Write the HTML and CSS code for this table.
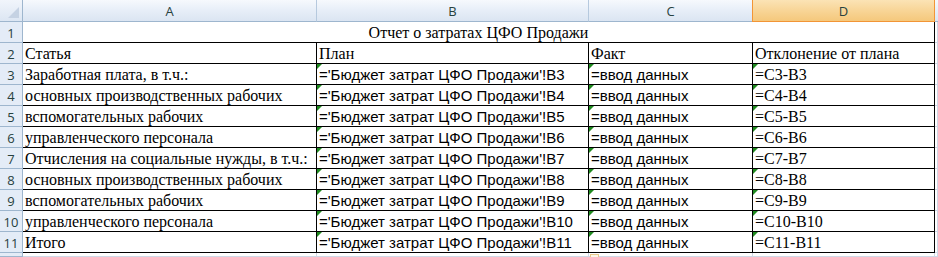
FILE: index.html
```html
<!DOCTYPE html>
<html lang="ru">
<head>
<meta charset="utf-8">
<title>Отчет о затратах ЦФО Продажи</title>
<link rel="stylesheet" href="styles.css">
</head>
<body>
<div class="sheet">
  <div class="corner"><span class="corner-tri"></span></div>
  <div class="colhead">A</div>
  <div class="colhead">B</div>
  <div class="colhead">C</div>
  <div class="colhead sel">D</div>
  <div class="colhead edge"></div>

  <div class="rowhead">1</div>
  <div class="cell title">Отчет о затратах ЦФО Продажи</div>
  <div class="cell grid"></div>

  <div class="rowhead">2</div>
  <div class="cell b serif">Статья</div>
  <div class="cell b serif">План</div>
  <div class="cell b serif">Факт</div>
  <div class="cell b serif">Отклонение от плана</div>
  <div class="cell grid"></div>

  <div class="rowhead">3</div>
  <div class="cell b serif">Заработная плата, в т.ч.:</div>
  <div class="cell b sans flag">='Бюджет затрат ЦФО Продажи'!B3</div>
  <div class="cell b sans flag">=ввод данных</div>
  <div class="cell b serif flag">=C3-B3</div>
  <div class="cell grid"></div>

  <div class="rowhead">4</div>
  <div class="cell b serif">основных производственных рабочих</div>
  <div class="cell b sans flag">='Бюджет затрат ЦФО Продажи'!B4</div>
  <div class="cell b sans flag">=ввод данных</div>
  <div class="cell b serif flag">=C4-B4</div>
  <div class="cell grid"></div>

  <div class="rowhead">5</div>
  <div class="cell b serif">вспомогательных рабочих</div>
  <div class="cell b sans flag">='Бюджет затрат ЦФО Продажи'!B5</div>
  <div class="cell b sans flag">=ввод данных</div>
  <div class="cell b serif flag">=C5-B5</div>
  <div class="cell grid"></div>

  <div class="rowhead">6</div>
  <div class="cell b serif">управленческого персонала</div>
  <div class="cell b sans flag">='Бюджет затрат ЦФО Продажи'!B6</div>
  <div class="cell b sans flag">=ввод данных</div>
  <div class="cell b serif flag">=C6-B6</div>
  <div class="cell grid"></div>

  <div class="rowhead">7</div>
  <div class="cell b serif">Отчисления на социальные нужды, в т.ч.:</div>
  <div class="cell b sans flag">='Бюджет затрат ЦФО Продажи'!B7</div>
  <div class="cell b sans flag">=ввод данных</div>
  <div class="cell b serif flag">=C7-B7</div>
  <div class="cell grid"></div>

  <div class="rowhead">8</div>
  <div class="cell b serif">основных производственных рабочих</div>
  <div class="cell b sans flag">='Бюджет затрат ЦФО Продажи'!B8</div>
  <div class="cell b sans flag">=ввод данных</div>
  <div class="cell b serif flag">=C8-B8</div>
  <div class="cell grid"></div>

  <div class="rowhead">9</div>
  <div class="cell b serif">вспомогательных рабочих</div>
  <div class="cell b sans flag">='Бюджет затрат ЦФО Продажи'!B9</div>
  <div class="cell b sans flag">=ввод данных</div>
  <div class="cell b serif flag">=C9-B9</div>
  <div class="cell grid"></div>

  <div class="rowhead">10</div>
  <div class="cell b serif">управленческого персонала</div>
  <div class="cell b sans flag">='Бюджет затрат ЦФО Продажи'!B10</div>
  <div class="cell b sans flag">=ввод данных</div>
  <div class="cell b serif flag">=C10-B10</div>
  <div class="cell grid"></div>

  <div class="rowhead">11</div>
  <div class="cell b serif">Итого</div>
  <div class="cell b sans flag">='Бюджет затрат ЦФО Продажи'!B11</div>
  <div class="cell b sans flag">=ввод данных</div>
  <div class="cell b serif flag">=C11-B11</div>
  <div class="cell grid"></div>

  <div class="rowhead"></div>
  <div class="cell grid"></div>
  <div class="cell grid"></div>
  <div class="cell grid"><span class="smarttag"></span></div>
  <div class="cell grid"></div>
  <div class="cell grid"></div>
</div>
</body>
</html>
```

FILE: styles.css
```css
* { box-sizing: border-box; }

html, body {
  margin: 0;
  padding: 0;
  background: #ffffff;
  overflow: hidden;
}

.sheet {
  display: grid;
  grid-template-columns: 23px 294px 272px 164px 182px 3px;
  grid-template-rows: 22px repeat(11, 21px) 4px;
  width: 938px;
  height: 257px;
  overflow: hidden;
}

.corner {
  position: relative;
  background: linear-gradient(#f1f5fb, #dce6f3);
  border-right: 1px solid #9eb6ce;
  border-bottom: 1px solid #9eb6ce;
}

.corner-tri {
  position: absolute;
  right: 3px;
  bottom: 3px;
  width: 0;
  height: 0;
  border-left: 11px solid transparent;
  border-bottom: 11px solid #c5d2e3;
}

.colhead {
  display: flex;
  align-items: center;
  justify-content: center;
  padding-top: 1px;
  background: linear-gradient(#f6f9fd 0%, #e7eef8 50%, #dbe5f2 100%);
  border-right: 1px solid #b6c9de;
  border-bottom: 1px solid #9eb6ce;
  font-family: "Open Sans", "Liberation Sans", sans-serif;
  font-size: 13px;
  color: #27413e;
}

.colhead.sel {
  background: linear-gradient(#fbe3b5 0%, #f8d597 50%, #f5c87c 100%);
  border-left: 1px solid #f29536;
  border-right: 1px solid #f29536;
  border-bottom: 1px solid #f29536;
  margin-left: -1px;
}

.colhead.edge {
  border-right: none;
}

.rowhead {
  display: flex;
  align-items: center;
  justify-content: center;
  padding-top: 1px;
  background: #e4ecf7;
  border-right: 1px solid #9eb6ce;
  border-bottom: 1px solid #9eb6ce;
  font-family: "Open Sans", "Liberation Sans", sans-serif;
  font-size: 13px;
  color: #27413e;
}

.cell {
  position: relative;
  display: flex;
  align-items: flex-end;
  padding-left: 2px;
  white-space: nowrap;
  overflow: visible;
  color: #000000;
  line-height: 18px;
}

.cell.grid {
  border-right: 1px solid #d0d7e5;
  border-bottom: 1px solid #d0d7e5;
}

.cell.b {
  border-right: 1px solid #000000;
  border-bottom: 1px solid #000000;
}

.title {
  grid-column: 2 / span 4;
  justify-content: center;
  border-right: 1px solid #000000;
  border-bottom: 1px solid #000000;
  font-family: "Liberation Serif", "Times New Roman", serif;
  font-size: 16px;
  padding-left: 0;
}

.serif {
  font-family: "Liberation Serif", "Times New Roman", serif;
  font-size: 16px;
}

.sans {
  font-family: "Liberation Sans", Arial, sans-serif;
  font-size: 15px;
}

.flag::before {
  content: "";
  position: absolute;
  left: 0;
  top: 0;
  width: 0;
  height: 0;
  border-top: 5px solid #1f8a1f;
  border-right: 5px solid transparent;
}

.smarttag {
  position: absolute;
  left: 1px;
  top: 1px;
  width: 9px;
  height: 6px;
  border: 1px solid #e8c98d;
  border-bottom: none;
  background: #fdf6e6;
}
```
